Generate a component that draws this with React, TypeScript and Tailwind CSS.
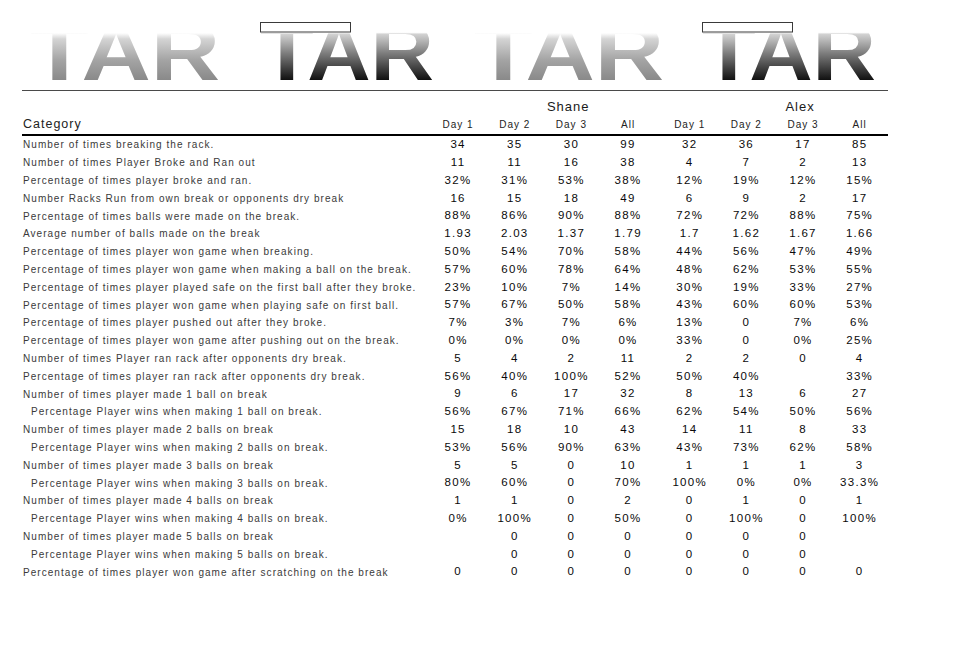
import React from 'react';

type Row = { label: string; indent?: boolean; shane: string[]; alex: string[] };

const rows: Row[] = [
    { label: 'Number of times breaking the rack.', shane: ['34', '35', '30', '99'], alex: ['32', '36', '17', '85'] },
    { label: 'Number of times Player Broke and Ran out', shane: ['11', '11', '16', '38'], alex: ['4', '7', '2', '13'] },
    { label: 'Percentage of times player broke and ran.', shane: ['32%', '31%', '53%', '38%'], alex: ['12%', '19%', '12%', '15%'] },
    { label: 'Number Racks Run from own break or opponents dry break', shane: ['16', '15', '18', '49'], alex: ['6', '9', '2', '17'] },
    { label: 'Percentage of times balls were made on the break.', shane: ['88%', '86%', '90%', '88%'], alex: ['72%', '72%', '88%', '75%'] },
    { label: 'Average number of balls made on the break', shane: ['1.93', '2.03', '1.37', '1.79'], alex: ['1.7', '1.62', '1.67', '1.66'] },
    { label: 'Percentage of times player won game when breaking.', shane: ['50%', '54%', '70%', '58%'], alex: ['44%', '56%', '47%', '49%'] },
    { label: 'Percentage of times player won game when making a ball on the break.', shane: ['57%', '60%', '78%', '64%'], alex: ['48%', '62%', '53%', '55%'] },
    { label: 'Percentage of times player played safe on the first ball after they broke.', shane: ['23%', '10%', '7%', '14%'], alex: ['30%', '19%', '33%', '27%'] },
    { label: 'Percentage of times player won game when playing safe on first ball.', shane: ['57%', '67%', '50%', '58%'], alex: ['43%', '60%', '60%', '53%'] },
    { label: 'Percentage of times player pushed out after they broke.', shane: ['7%', '3%', '7%', '6%'], alex: ['13%', '0', '7%', '6%'] },
    { label: 'Percentage of times player won game after pushing out on the break.', shane: ['0%', '0%', '0%', '0%'], alex: ['33%', '0', '0%', '25%'] },
    { label: 'Number of times Player ran rack after opponents dry break.', shane: ['5', '4', '2', '11'], alex: ['2', '2', '0', '4'] },
    { label: 'Percentage of times player ran rack after opponents dry break.', shane: ['56%', '40%', '100%', '52%'], alex: ['50%', '40%', '', '33%'] },
    { label: 'Number of times player made 1 ball on break', shane: ['9', '6', '17', '32'], alex: ['8', '13', '6', '27'] },
    { label: 'Percentage Player wins when making 1 ball on break.', indent: true, shane: ['56%', '67%', '71%', '66%'], alex: ['62%', '54%', '50%', '56%'] },
    { label: 'Number of times player made 2 balls on break', shane: ['15', '18', '10', '43'], alex: ['14', '11', '8', '33'] },
    { label: 'Percentage Player wins when making 2 balls on break.', indent: true, shane: ['53%', '56%', '90%', '63%'], alex: ['43%', '73%', '62%', '58%'] },
    { label: 'Number of times player made 3 balls on break', shane: ['5', '5', '0', '10'], alex: ['1', '1', '1', '3'] },
    { label: 'Percentage Player wins when making 3 balls on break.', indent: true, shane: ['80%', '60%', '0', '70%'], alex: ['100%', '0%', '0%', '33.3%'] },
    { label: 'Number of times player made 4 balls on break', shane: ['1', '1', '0', '2'], alex: ['0', '1', '0', '1'] },
    { label: 'Percentage Player wins when making 4 balls on break.', indent: true, shane: ['0%', '100%', '0', '50%'], alex: ['0', '100%', '0', '100%'] },
    { label: 'Number of times player made 5 balls on break', shane: ['', '0', '0', '0'], alex: ['0', '0', '0', ''] },
    { label: 'Percentage Player wins when making 5 balls on break.', indent: true, shane: ['', '0', '0', '0'], alex: ['0', '0', '0', ''] },
    { label: 'Percentage of times player won game after scratching on the break', shane: ['0', '0', '0', '0'], alex: ['0', '0', '0', '0'] },
];

const days = ['Day 1', 'Day 2', 'Day 3', 'All'];

function Logo({ dark, id }: { dark: boolean; id: string }) {
    const w = dark ? 176 : 192;
    return (
        <svg width={w} height={94} viewBox={`0 0 ${w} 94`} className="shrink-0">
            <defs>
                <linearGradient id={id} x1="0" y1="15" x2="0" y2="75" gradientUnits="userSpaceOnUse">
                    {dark ? (
                        <>
                            <stop offset="0" stopColor="#ffffff" />
                            <stop offset="0.19" stopColor="#ffffff" />
                            <stop offset="0.22" stopColor="#d2d2d2" />
                            <stop offset="0.55" stopColor="#7a7a7a" />
                            <stop offset="1" stopColor="#0c0c0c" />
                        </>
                    ) : (
                        <>
                            <stop offset="0" stopColor="#ffffff" />
                            <stop offset="0.2" stopColor="#ffffff" />
                            <stop offset="0.3" stopColor="#d4d4d4" />
                            <stop offset="0.65" stopColor="#a4a4a4" />
                            <stop offset="1" stopColor="#888888" />
                        </>
                    )}
                </linearGradient>
            </defs>
            <text
                x="0"
                y="74"
                fontFamily="'Liberation Sans', Arial, sans-serif"
                fontWeight="700"
                fontSize="80"
                textLength={w - 2}
                lengthAdjust="spacingAndGlyphs"
                fill={`url(#${id})`}
            >
                TAR
            </text>
            {dark && <rect x="0.5" y="16.5" width="90" height="9.5" fill="#ffffff" stroke="#3a3a3a" strokeWidth="1" />}
        </svg>
    );
}

function Cells({ values }: { values: string[] }) {
    return (
        <div className="flex">
            {values.map((v, i) => (
                <div key={i} className="w-[56.67px] text-center">
                    {v}
                </div>
            ))}
        </div>
    );
}

export default function App() {
    return (
        <div className="w-[974px] h-[646px] bg-white overflow-hidden font-['Liberation_Sans',Arial,sans-serif]">
            {/* Logo banner */}
            <div className="flex h-[84px] pt-[6px] pl-[30px]">
                <Logo dark={false} id="g1" />
                <div className="ml-[38px]"><Logo dark id="g2" /></div>
                <div className="ml-[38px]"><Logo dark={false} id="g3" /></div>
                <div className="ml-[36px]"><Logo dark id="g4" /></div>
            </div>
            <div className="relative ml-[22px] w-[866px] h-px bg-[#4a4a4a] mt-[6px]" />

            <div className="relative bg-white ml-[22px] w-[866px]">
                {/* Player names */}
                <div className="flex h-[17px] pt-0 mt-[7px] text-[13px] leading-[17px] tracking-[1px] text-[#1a1a1a]">
                    <div className="w-[420px]" />
                    <div className="w-[226.7px] pl-[42px] text-center">Shane</div>
                    <div className="w-[226.7px] ml-[5px] pl-[48px] text-center">Alex</div>
                </div>
                {/* Day headers */}
                <div className="flex h-[19px] items-center text-[#222]">
                    <div className="w-[420px] pl-[1px] text-[12.5px] tracking-[1px]">Category</div>
                    <div className="flex text-[10px] tracking-[1px]">
                        {days.map(d => (
                            <div key={d} className="w-[56.67px] text-center">{d}</div>
                        ))}
                    </div>
                    <div className="flex ml-[5px] text-[10px] tracking-[1px]">
                        {days.map(d => (
                            <div key={d} className="w-[56.67px] text-center">{d}</div>
                        ))}
                    </div>
                </div>
                <div className="h-[2px] bg-black" />

                {/* Data rows */}
                {rows.map((row, i) => (
                    <div key={i} className="flex h-[17.8px] items-center">
                        <div className={`w-[420px] whitespace-nowrap text-[10px] tracking-[1.05px] text-[#3a3a3a] ${row.indent ? 'pl-[9px]' : 'pl-[1px]'}`}>
                            {row.label}
                        </div>
                        <div className="text-[11.5px] tracking-[1.3px] text-[#0a0a0a]">
                            <Cells values={row.shane} />
                        </div>
                        <div className="ml-[5px] text-[11.5px] tracking-[1.3px] text-[#0a0a0a]">
                            <Cells values={row.alex} />
                        </div>
                    </div>
                ))}
            </div>
        </div>
    );
}
